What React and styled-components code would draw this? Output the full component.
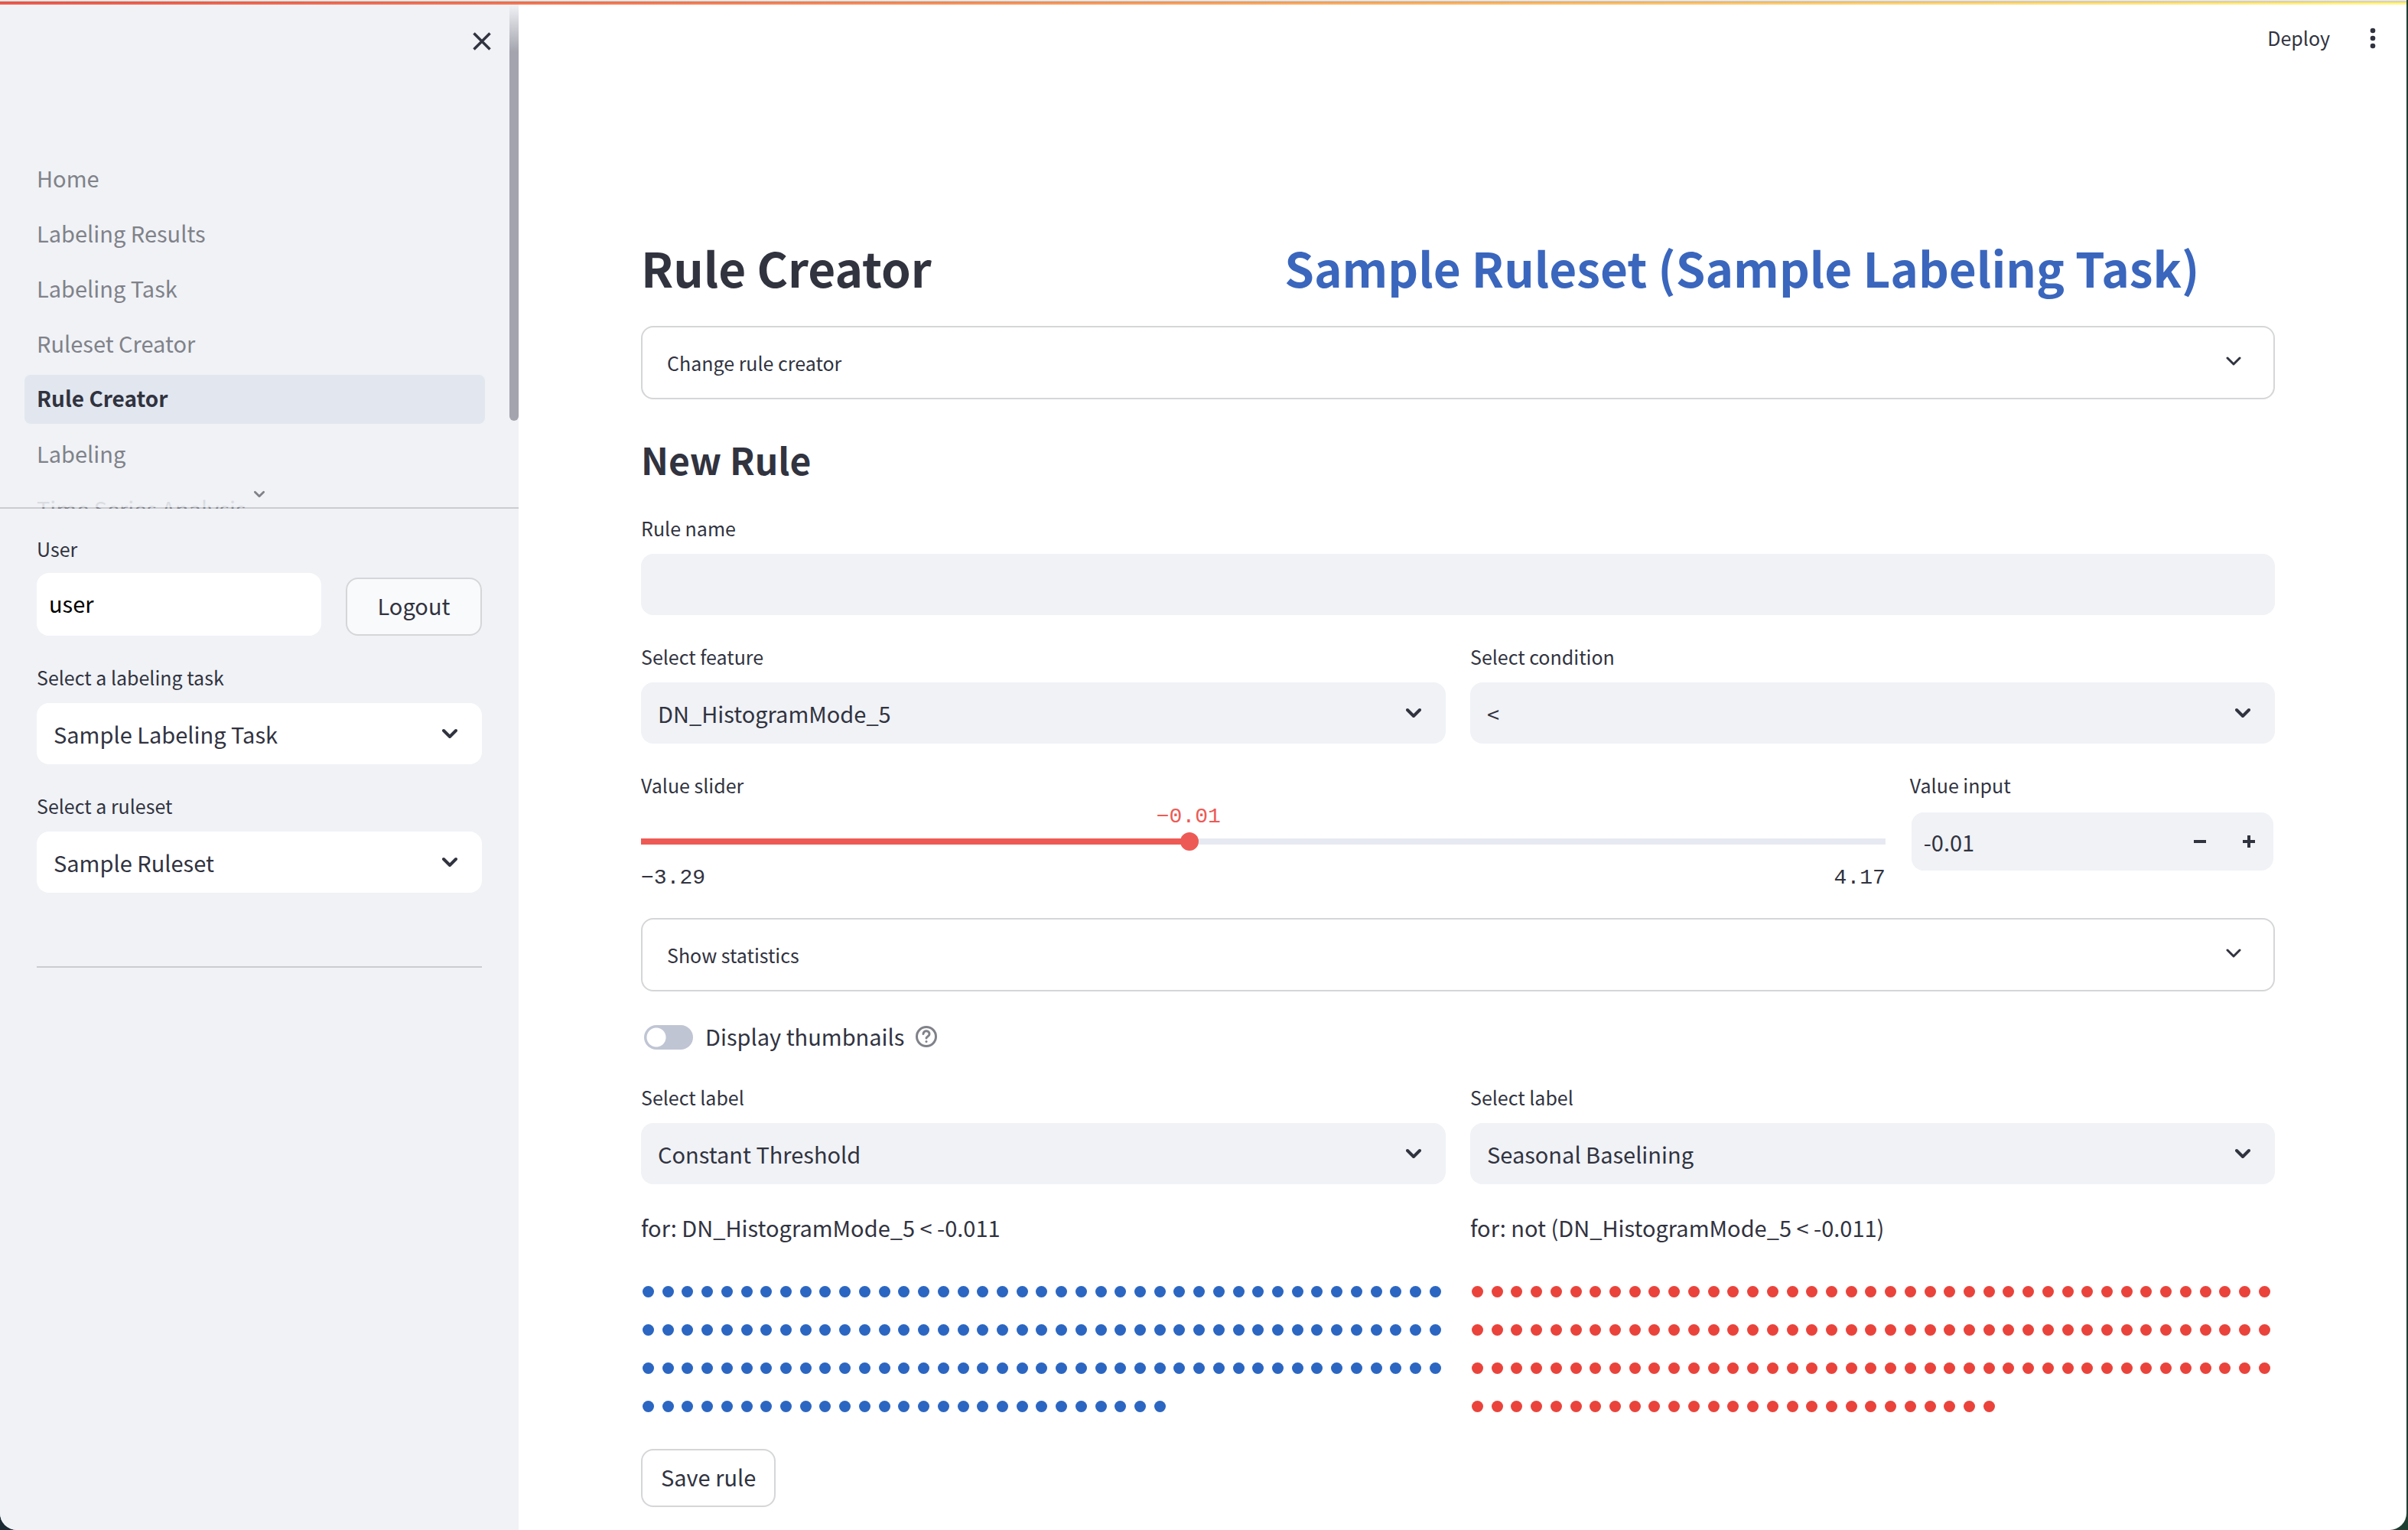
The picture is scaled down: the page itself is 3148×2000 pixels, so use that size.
import React, { useState } from "react";
import styled, { createGlobalStyle } from "styled-components";

const sans = `"Source Sans Pro", "Noto Sans CJK JP", "Noto Sans", sans-serif`;
const mono = `"Liberation Mono", monospace`;
const ink = "#31333f";
const panel = "#f0f2f6";
const line = "#d5d6d8";

const GlobalStyle = createGlobalStyle`
  * { box-sizing: border-box; }
  body {
    margin: 0;
    background: linear-gradient(90deg, #1b2a33, #1e3d31);
    color: ${ink};
    font-family: ${sans};
    font-size: 29px;
    line-height: 48px;
  }
  button, input, select { font: inherit; color: inherit; margin: 0; }
  h1, h2, p { margin: 0; }
`;

const Window = styled.div`
  display: flex;
  flex-direction: column;
  min-height: 100vh;
  margin-right: 2px;
  background: #fff;
  border-radius: 0 0 22px 22px;
  overflow: hidden;
`;

const TopEdge = styled.div`
  height: 6px;
  flex: none;
  border-top: 2px solid #e4e4e4;
  background:
    linear-gradient(rgba(90, 40, 0, 0.25), rgba(90, 40, 0, 0.25)) top / 100% 1px no-repeat,
    linear-gradient(90deg, #ee5a4e, #f5825a 30%, #fbb566 60%, #fff58a);
`;

const Shell = styled.div`
  display: flex;
  flex: 1;
`;

const Sidebar = styled.aside`
  position: relative;
  flex: none;
  width: 678px;
  background: ${panel};
`;

const ScrollThumb = styled.div`
  position: absolute;
  top: 0;
  right: 0;
  width: 12px;
  height: 544px;
  border-radius: 0 0 6px 6px;
  background: linear-gradient(#f0f2f6, #a3a4ad 62px);
`;

const SidebarTop = styled.div`
  display: flex;
  justify-content: flex-end;
  height: 196px;
  padding: 32px 32px 0;
`;

const IconButton = styled.button`
  display: flex;
  flex: none;
  align-items: center;
  justify-content: center;
  width: ${(p) => p.$width || 32}px;
  height: 32px;
  padding: 0;
  border: 0;
  background: none;
`;

const Nav = styled.nav`
  position: relative;
  height: 463px;
  padding: 0 44px 0 32px;
  overflow: hidden;
  background: linear-gradient(#cbccd1, #cbccd1) bottom / 100% 2px no-repeat;
`;

const NavFade = styled.div`
  position: absolute;
  left: 0;
  right: 0;
  bottom: 2px;
  display: flex;
  justify-content: center;
  align-items: flex-start;
  height: 32px;
  padding-top: 8px;
  background: linear-gradient(rgba(240, 242, 246, 0.6), rgba(240, 242, 246, 0.85));
`;

const NavLink = styled.a`
  display: block;
  height: 64px;
  margin-bottom: 8px;
  padding: 6px 16px 10px;
  border-radius: 8px;
  color: ${(p) => (p.$active ? ink : "#808289")};
  font-size: ${(p) => (p.$active ? 28 : 29)}px;
  font-weight: ${(p) => (p.$active ? 700 : 400)};
  background: ${(p) => (p.$active ? "#e2e7ef" : "transparent")};
  text-decoration: none;
`;

const SidebarBody = styled.div`
  display: flex;
  flex-direction: column;
  gap: 34px;
  padding: 32px 48px 0;
`;

const UserRow = styled.div`
  display: flex;
  align-items: flex-end;
  gap: 32px;
`;

const Divider = styled.hr`
  width: 100%;
  height: 2px;
  margin: 62px 0 0;
  border: 0;
  background: #cbccd1;
`;

const Field = styled.div`
  display: flex;
  flex-direction: column;
  flex: ${(p) => p.$grow || 1} 1 0;
  min-width: 0;
`;

const Label = styled.label`
  height: ${(p) => (p.$tight ? 52 : 54)}px;
  font-size: 25px;
  line-height: 40px;
`;

const TextInput = styled.input`
  width: 100%;
  min-width: 0;
  height: 80px;
  padding: 0 16px;
  border: 0;
  border-radius: 16px;
  background: ${panel};
`;

const UserInput = styled(TextInput)`
  height: 82px;
  padding-bottom: 4px;
  background: #fff;
  color: #000;
`;

const NumberInput = styled(TextInput)`
  height: 76px;
`;

const SelectBox = styled.div`
  position: relative;
  display: flex;
`;

const NativeSelect = styled.select`
  appearance: none;
  width: 100%;
  height: 80px;
  padding: 0 64px 0 22px;
  border: 0;
  border-radius: 16px;
  background: ${(p) => p.$bg || panel};
`;

const SelectArrow = styled.span`
  position: absolute;
  right: 32px;
  top: 30px;
  display: flex;
  pointer-events: none;
`;

const Button = styled.button`
  align-self: flex-start;
  height: 76px;
  padding: 0 24px 4px;
  border: 2px solid ${line};
  border-radius: 16px;
  background: #fff;
`;

const LogoutButton = styled(Button)`
  align-self: flex-end;
  width: 178px;
  background: #f9fafc;
`;

const Main = styled.main`
  flex: 1;
  min-width: 0;
`;

const Header = styled.header`
  display: flex;
  justify-content: flex-end;
  align-items: center;
  gap: 40px;
  height: 88px;
  padding: 0 28px;
`;

const DeployButton = styled.button`
  padding: 0 0 2px;
  border: 0;
  background: none;
  font-size: 25px;
`;

const Content = styled.div`
  display: flex;
  flex-direction: column;
  padding: 208px 172px 28px 160px;
`;

const Columns = styled.div`
  display: flex;
  gap: 32px;
  margin-bottom: ${(p) => p.$after || 0}px;
`;

const TitleRow = styled.div`
  display: grid;
  grid-template-columns: 5fr 8fr;
  gap: 32px;
  margin-bottom: 30px;
`;

const Title = styled.h1`
  font-size: 62px;
  line-height: 94px;
  font-weight: 700;
  white-space: nowrap;
  color: ${(p) => (p.$accent ? "#3a66bd" : ink)};
`;

const Subtitle = styled.h2`
  margin: 40px 0 32px;
  font-size: 48px;
  line-height: 76px;
  font-weight: 700;
`;

const Expander = styled.button`
  display: flex;
  align-items: center;
  justify-content: space-between;
  width: 100%;
  height: 96px;
  padding: 0 42px 0 32px;
  border: 2px solid ${line};
  border-radius: 16px;
  background: #fff;
  font-size: 25px;

  svg { margin-bottom: 4px; }
`;

const SliderBox = styled.div`
  position: relative;
  padding-top: 28px;
`;

const SliderInput = styled.input`
  appearance: none;
  display: block;
  width: 100%;
  height: 24px;
  background: linear-gradient(90deg, #ed5a55 0 44%, #e6e9f1 44%) center / 100% 8px no-repeat;
  border-radius: 4px;
  &::-webkit-slider-thumb {
    appearance: none;
    width: 24px;
    height: 24px;
    border-radius: 50%;
    background: #ed5a55;
  }
`;

const SliderValue = styled.output`
  position: absolute;
  top: -12px;
  left: 44%;
  transform: translateX(-50%);
  font-family: ${mono};
  font-size: 28px;
  line-height: 40px;
  color: #ed5a55;
`;

const SliderRange = styled.div`
  display: flex;
  justify-content: space-between;
  margin-top: 16px;
  font-family: ${mono};
  font-size: 28px;
  line-height: 40px;
`;

const NumberBox = styled.div`
  display: flex;
  align-items: center;
  height: 76px;
  margin: 2px;
  border-radius: 16px;
  background: ${panel};
`;

const ToggleRow = styled.div`
  display: flex;
  align-items: center;
  gap: 14px;
  height: 48px;
  margin: 36px 0 34px 4px;
`;

const Toggle = styled.input`
  appearance: none;
  flex: none;
  width: 64px;
  height: 32px;
  border-radius: 16px;
  background: radial-gradient(circle at 16px 16px, #fff 12px, #bfc5d3 13px);
`;

const ToggleLabel = styled.label`
  padding: 0 0 4px 2px;
`;

const Condition = styled.p`
  margin-top: 32px;
`;

const Dots = styled.div`
  display: grid;
  grid-template-columns: repeat(41, 15px);
  justify-content: space-between;
  row-gap: 35px;
  padding: 0 6px 0 2px;
  margin: 53px 0 48px;
`;

const Dot = styled.span`
  height: 15px;
  border-radius: 50%;
  background: ${(p) => p.$color};
`;

const Chevron = ({ size = 20, stroke = 4, color = ink }) => (
  <svg width={size} height={size} viewBox="0 0 20 20" fill="none" stroke={color} strokeWidth={stroke} strokeLinecap="round" strokeLinejoin="round" aria-hidden="true">
    <path d="M2 6l8 8 8-8" />
  </svg>
);

const Select = ({ id, label, value, bg }) => (
  <Field>
    <Label htmlFor={id}>{label}</Label>
    <SelectBox>
      <NativeSelect id={id} $bg={bg}>
        <option>{value}</option>
      </NativeSelect>
      <SelectArrow>
        <Chevron />
      </SelectArrow>
    </SelectBox>
  </Field>
);

const pages = ["Home", "Labeling Results", "Labeling Task", "Ruleset Creator", "Rule Creator", "Labeling", "Time Series Analysis"];

const DotPlot = ({ count, color }) => (
  <Dots>
    {Array.from({ length: count }, (_, i) => (
      <Dot key={i} $color={color} />
    ))}
  </Dots>
);

export default function App() {
  const [value, setValue] = useState(-0.01);
  return (
    <>
      <GlobalStyle />
      <Window>
        <TopEdge />
        <Shell>
          <Sidebar>
            <SidebarTop>
              <IconButton aria-label="Close sidebar">
                <svg width="24" height="24" viewBox="0 0 24 24" stroke={ink} strokeWidth="3.500" aria-hidden="true">
                  <path d="M1.500 1.500l21 21M22.500 1.500l-21 21" />
                </svg>
              </IconButton>
            </SidebarTop>
            <Nav>
              {pages.map((p) => (
                <NavLink key={p} href="#" $active={p === "Rule Creator"}>
                  {p}
                </NavLink>
              ))}
              <NavFade>
                <Chevron size={14} color="#808289" />
              </NavFade>
            </Nav>
            <SidebarBody>
              <UserRow>
                <Field>
                  <Label htmlFor="user" $tight>User</Label>
                  <UserInput id="user" defaultValue="user" />
                </Field>
                <LogoutButton>Logout</LogoutButton>
              </UserRow>
              <Select id="task" label="Select a labeling task" value="Sample Labeling Task" bg="#fff" />
              <Select id="ruleset" label="Select a ruleset" value="Sample Ruleset" bg="#fff" />
              <Divider />
            </SidebarBody>
            <ScrollThumb />
          </Sidebar>
          <Main>
            <Header>
              <DeployButton>Deploy</DeployButton>
              <IconButton aria-label="Menu">
                <svg width="8" height="28" viewBox="0 0 8 28" fill={ink} aria-hidden="true">
                  <circle cx="4" cy="4" r="3.3" />
                  <circle cx="4" cy="14" r="3.3" />
                  <circle cx="4" cy="24" r="3.3" />
                </svg>
              </IconButton>
            </Header>
            <Content>
              <TitleRow>
                <Title>Rule Creator</Title>
                <Title as="h2" $accent>Sample Ruleset (Sample Labeling Task)</Title>
              </TitleRow>
              <Expander>
                Change rule creator
                <Chevron stroke={3} />
              </Expander>
              <Subtitle>New Rule</Subtitle>
              <Columns $after={34}>
                <Field>
                  <Label htmlFor="name">Rule name</Label>
                  <TextInput id="name" />
                </Field>
              </Columns>
              <Columns $after={34}>
                <Select id="feature" label="Select feature" value="DN_HistogramMode_5" />
                <Select id="condition" label="Select condition" value="<" />
              </Columns>
              <Columns $after={32}>
                <Field $grow={75}>
                  <Label htmlFor="slider">Value slider</Label>
                  <SliderBox>
                    <SliderValue htmlFor="slider">−0.01</SliderValue>
                    <SliderInput
                      id="slider"
                      type="range"
                      min="-3.29"
                      max="4.17"
                      step="0.01"
                      value={value}
                      onChange={(e) => setValue(Number(e.target.value))}
                    />
                    <SliderRange>
                      <span>−3.29</span>
                      <span>4.17</span>
                    </SliderRange>
                  </SliderBox>
                </Field>
                <Field $grow={22}>
                  <Label htmlFor="value">Value input</Label>
                  <NumberBox>
                    <NumberInput id="value" value={value} onChange={(e) => setValue(e.target.value)} />
                    <IconButton $width={64} aria-label="Decrease">
                      <svg width="16" height="16" viewBox="0 0 16 16" fill={ink} aria-hidden="true">
                        <path d="M0 6h16v4H0z" />
                      </svg>
                    </IconButton>
                    <IconButton $width={64} aria-label="Increase">
                      <svg width="16" height="16" viewBox="0 0 16 16" fill={ink} aria-hidden="true">
                        <path d="M0 6h6V0h4v6h6v4h-6v6H6v-6H0z" />
                      </svg>
                    </IconButton>
                  </NumberBox>
                </Field>
              </Columns>
              <Expander>
                Show statistics
                <Chevron stroke={3} />
              </Expander>
              <ToggleRow>
                <Toggle type="checkbox" id="thumbs" />
                <ToggleLabel htmlFor="thumbs">Display thumbnails</ToggleLabel>
                <svg width="30" height="30" viewBox="0 0 30 30" fill="none" stroke="#808289" strokeWidth="3" strokeLinecap="round" strokeLinejoin="round" aria-hidden="true">
                  <circle cx="15" cy="14" r="12.500" />
                  <path d="M11 10.500a4 4 0 0 1 8 .5c0 2.600-4 3.200-4 5" />
                  <path d="M15 20.500v.1" />
                </svg>
              </ToggleRow>
              <Columns>
                <Field>
                  <Select id="label-true" label="Select label" value="Constant Threshold" />
                  <Condition>for: DN_HistogramMode_5 &lt; -0.011</Condition>
                  <DotPlot count={150} color="#2b66c2" />
                </Field>
                <Field>
                  <Select id="label-false" label="Select label" value="Seasonal Baselining" />
                  <Condition>for: not (DN_HistogramMode_5 &lt; -0.011)</Condition>
                  <DotPlot count={150} color="#ea433b" />
                </Field>
              </Columns>
              <Button>Save rule</Button>
            </Content>
          </Main>
        </Shell>
      </Window>
    </>
  );
}
